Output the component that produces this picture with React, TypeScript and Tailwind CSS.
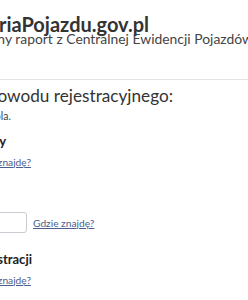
import React from "react";

const font = { fontFamily: "Lato, 'Open Sans', sans-serif" };

function Link() {
  return (
    <a className="shrink-0 text-[10.2px] leading-[12px] text-[#4d5d8d] underline">Gdzie znajdę?</a>
  );
}

function Input({ w }: { w: string }) {
  return <div className={`h-[21px] ${w} shrink-0 rounded-[3px] border border-[#c9ccd3] bg-white`} />;
}

export default function App() {
  return (
    <div className="w-[248px] h-[300px] overflow-hidden bg-white" style={font}>
      <header className="h-[80px] border-b border-[#e3e3e3] pt-[16px]">
        <div className="ml-[-49px] whitespace-nowrap">
          <div className="text-[20px] leading-[17px] font-bold text-[#333]">HistoriaPojazdu.gov.pl</div>
          <div className="text-[13.9px] leading-[12px] text-[#444]">
            Bezpłatny raport z Centralnej Ewidencji Pojazdów i Kierowców
          </div>
        </div>
      </header>
      <main className="whitespace-nowrap">
        <div className="mt-[6px] flex w-[173px] justify-end">
          <h1 className="shrink-0 text-[17.2px] leading-[20px] font-normal text-[#333]">
            Podaj dane z dowodu rejestracyjnego:
          </h1>
        </div>
        <div className="mt-[4px] flex w-[11px] justify-end">
          <p className="shrink-0 text-[10.5px] leading-[13px] text-[#444]">Wypełnij wszystkie pola.</p>
        </div>

        <div className="mt-[10px] flex w-[6px] justify-end">
          <div className="shrink-0 text-[13px] leading-[16px] font-bold text-[#222]">Numer rejestracyjny</div>
        </div>
        <div className="mt-[2px] flex w-[31px] items-center justify-end gap-[6px]">
          <Input w="w-[90px]" />
          <Link />
        </div>

        <div className="mt-[22px] flex w-0 justify-end">
          <div className="mr-[4px] shrink-0 text-[13px] leading-[16px] font-bold text-[#222]">Numer VIN</div>
        </div>
        <div className="mt-[2px] flex items-center gap-[6px]">
          <div className="flex w-[27px] shrink-0 justify-end">
            <Input w="w-[150px]" />
          </div>
          <Link />
        </div>

        <div className="mt-[18px] flex w-[32px] justify-end">
          <div className="shrink-0 text-[13px] leading-[16px] font-bold text-[#222]">Data pierwszej rejestracji</div>
        </div>
        <div className="mt-[2px] flex w-[31px] items-center justify-end gap-[6px]">
          <Input w="w-[90px]" />
          <Link />
        </div>
      </main>
    </div>
  );
}
